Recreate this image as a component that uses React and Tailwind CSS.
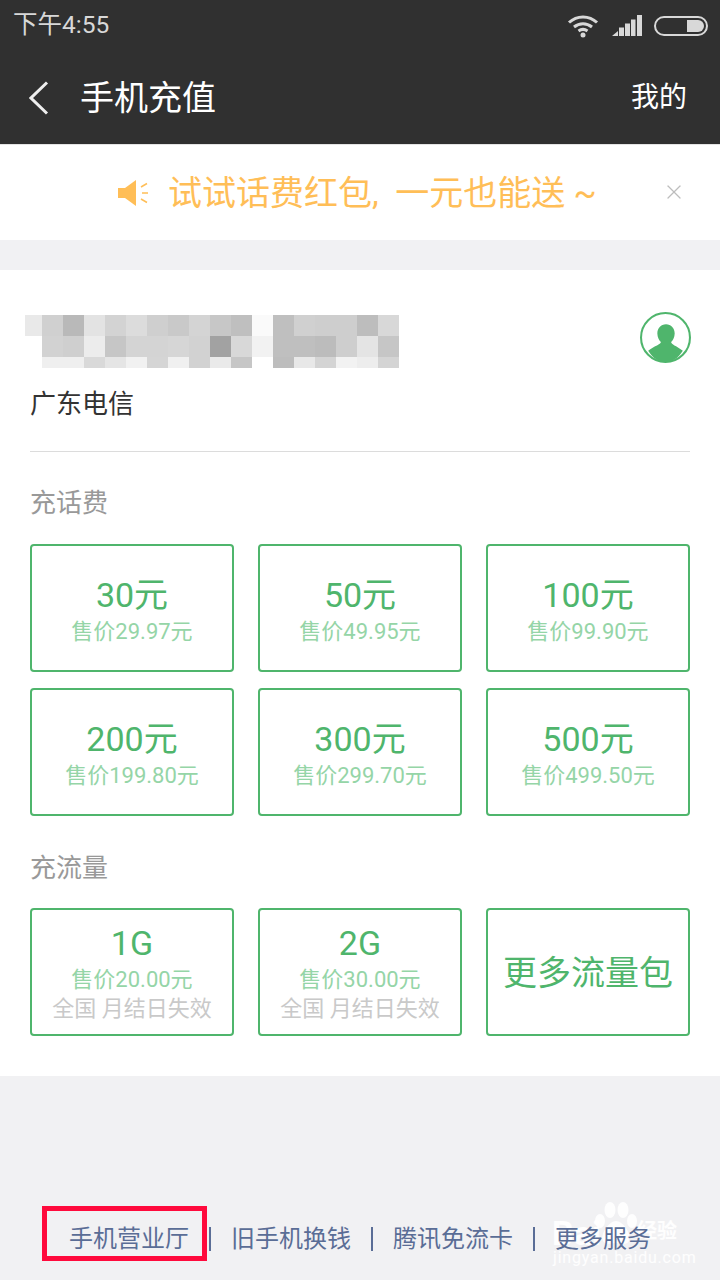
import React from 'react';
import { X } from 'lucide-react';

const font = 'font-["Roboto","Noto_Sans_CJK_SC",sans-serif]';

const mosaic = [
  ['bg-[#e9e9e9]', 'bg-[#d0d0d0]', 'bg-[#b9b9b9]', 'bg-[#e3e3e3]', 'bg-[#d3d3d3]', 'bg-[#dcdcdc]', 'bg-[#cfcfcf]', 'bg-[#c9c9c9]', 'bg-[#d4d4d4]', 'bg-[#c7c7c7]', 'bg-[#bfbfbf]', 'bg-[#fafafa]', 'bg-[#bfbfbf]', 'bg-[#d0d0d0]', 'bg-[#cecece]', 'bg-[#cecece]', 'bg-[#bdbdbd]', 'bg-[#d8d8d8]'],
  ['bg-white', 'bg-[#d2d2d2]', 'bg-[#cfcfcf]', 'bg-[#ececec]', 'bg-[#c6c6c6]', 'bg-[#d4d4d4]', 'bg-[#d4d4d4]', 'bg-[#d6d6d6]', 'bg-[#d2d2d2]', 'bg-[#a2a2a2]', 'bg-[#d8d8d8]', 'bg-[#f2f2f2]', 'bg-[#bfbfbf]', 'bg-[#bfbfbf]', 'bg-[#bcbcbc]', 'bg-[#cecece]', 'bg-[#e4e4e4]', 'bg-[#c6c6c6]'],
  ['bg-white', 'bg-[#efefef]', 'bg-[#efefef]', 'bg-[#d9d9d9]', 'bg-[#e5e5e5]', 'bg-[#f1f1f1]', 'bg-[#d5d5d5]', 'bg-[#f0f0f0]', 'bg-[#d2d2d2]', 'bg-[#eaeaea]', 'bg-[#c6c6c6]', 'bg-white', 'bg-[#bdbdbd]', 'bg-[#e8e8e8]', 'bg-[#d4d4d4]', 'bg-[#f2f2f2]', 'bg-[#ededed]', 'bg-[#d4d4d4]'],
];
const rowHeights = ['h-[21px]', 'h-[21px]', 'h-[11px]'];

const feeTiles = [
  { title: '30元', price: '售价29.97元' },
  { title: '50元', price: '售价49.95元' },
  { title: '100元', price: '售价99.90元' },
  { title: '200元', price: '售价199.80元' },
  { title: '300元', price: '售价299.70元' },
  { title: '500元', price: '售价499.50元' },
];

const dataTiles = [
  { title: '1G', price: '售价20.00元', note: '全国 月结日失效' },
  { title: '2G', price: '售价30.00元', note: '全国 月结日失效' },
];

const links = ['旧手机换钱', '腾讯免流卡', '更多服务'];

const StatusIcons = () => (
  <div className="flex items-center gap-[13px] pt-[1px]">
    <svg width="32" height="24" viewBox="0 0 32 24" fill="none" stroke="#d8d8d8" strokeWidth="3">
      <path d="M2 8.500C10 1 22 1 30 8.500" />
      <path d="M7 13C12.500 8.500 19.500 8.500 25 13" />
      <path d="M11.500 17C14.500 14.800 17.500 14.800 20.500 17" />
      <circle cx="16" cy="21" r="2.500" fill="#d8d8d8" stroke="none" />
    </svg>
    <svg width="30" height="21" viewBox="0 0 30 21" fill="#d8d8d8">
      <path d="M0 21L6 16V21Z" />
      <rect x="7" y="12.500" width="5" height="8.500" />
      <rect x="13" y="8.500" width="5" height="12.500" />
      <rect x="19" y="4.500" width="4.500" height="16.500" />
      <rect x="25" y="0" width="5" height="21" />
    </svg>
    <div className="w-[54px] h-[20px] rounded-full border-2 border-[#d8d8d8] flex justify-end p-[2px] -ml-[1px]">
      <div className="w-[17px] h-full bg-[#d8d8d8] rounded-r-full" />
    </div>
  </div>
);

const BackIcon = () => (
  <svg width="20" height="34" viewBox="0 0 20 34" fill="none" stroke="#eeeeee" strokeWidth="3" className="shrink-0">
    <path d="M18 1.500L2 17L18 32.500" />
  </svg>
);

const SpeakerIcon = () => (
  <svg width="32" height="26" viewBox="0 0 32 26" className="mr-[18px] shrink-0">
    <path d="M0 8H7L18 0V26L7 18H0Z" fill="#ffbe57" />
    <path d="M23 7L29 3.500M24 13H30M23 19L29 22.500" stroke="#ffbe57" strokeWidth="1.500" fill="none" />
  </svg>
);

const AvatarIcon = () => (
  <svg width="51" height="51" viewBox="0 0 50 50">
    <circle cx="25" cy="25" r="24" fill="#fff" stroke="#4fb56c" strokeWidth="2" />
    <path d="M17 21C17 16 20.500 12 25.500 12C30.500 12 34 16 34 21C34 25 32 28 30.500 29.500C31 32 35 33 42 38C37 46 31 49 25 49C19 49 13 46 8 38C15 33 20 32 20.500 29.500C19 28 17 25 17 21Z" fill="#4fb56c" />
  </svg>
);

const Tile = ({ title, price, note }) => (
  <div className="h-[128px] rounded-[4px] border-2 border-[#4fb56c] flex flex-col items-center justify-center bg-white">
    <div className={`text-[34px] text-[#4fb56c] ${note ? 'leading-[40px]' : 'leading-[48px]'}`}>{title}</div>
    <div className={`text-[22px] text-[#95d5a7] ${note ? 'leading-[34px]' : 'leading-[26px]'}`}>{price}</div>
    {note && <div className="text-[22px] leading-[24px] text-[#c9c9c9] whitespace-nowrap">{note}</div>}
  </div>
);

// baidu jingyan stamp, sits under the footer links
const Watermark = () => (
  <div className="absolute left-[550px] top-[1198px] w-[140px] h-[76px] text-white/90 pointer-events-none">
    <svg width="44" height="46" viewBox="0 0 44 46" fill="#ffffff" fillOpacity="0.9" className="absolute left-[44px] top-[3px]">
      <ellipse cx="16" cy="9" rx="5.500" ry="8" />
      <ellipse cx="29" cy="9" rx="5.500" ry="8" />
      <ellipse cx="6" cy="20" rx="5" ry="7" />
      <ellipse cx="38" cy="20" rx="5" ry="7" />
      <path d="M22 20C29 20 38 33 35 40C32 45 27 42 22 42C17 42 12 45 9 40C6 33 15 20 22 20Z" />
    </svg>
    <div className="absolute left-[2px] top-[17px] text-[34px] leading-[36px] font-bold whitespace-nowrap">Bai</div>
    <div className="absolute left-[87px] top-[21px] text-[20px] leading-[24px] font-bold whitespace-nowrap">经验</div>
    <div className="absolute left-[3px] top-[50px] text-[16px] leading-[20px] tracking-[0.800px] whitespace-nowrap">jingyan.baidu.com</div>
  </div>
);

const App = () => {
  return (
    <div className={`relative w-[720px] h-[1280px] overflow-hidden bg-[#f1f1f3] flex flex-col ${font}`}>
      {/* Dark top: status bar and title bar */}
      <div className="h-[144px] bg-[#303030] shrink-0 flex flex-col">
        <div className="h-[50px] pl-[13px] pr-[12px] flex items-center justify-between">
          <span className="text-[24.500px] leading-none text-[#d8d8d8]">下午4:55</span>
          <StatusIcons />
        </div>
        <div className="flex-1 flex items-center pl-[29px] pr-[33px] pt-[1px]">
          <BackIcon />
          <span className="ml-[31px] text-[34px] leading-none text-white">手机充值</span>
          <span className="ml-auto text-[28px] leading-none text-white">我的</span>
        </div>
      </div>

      {/* Notice */}
      <div className="h-[96px] bg-white shrink-0 flex items-center pl-[118px] border-t border-[#e4e4e4]">
        <SpeakerIcon />
        <span className="text-[34px] leading-none text-[#ffbe57] whitespace-nowrap">
          试试话费红包<span className="mr-[8px]">,</span> 一元也能送 ~
        </span>
        <X size={24} strokeWidth={1.300} className="text-[#bdbdbd] absolute left-[662px] top-[180px]" />
      </div>

      {/* Main card */}
      <div className="mt-[30px] h-[806px] bg-white shrink-0 px-[30px] flex flex-col">
        <div className="h-[182px] border-b border-[#dcdcdc] relative shrink-0">
          <div className="-ml-[5px] pt-[45px] flex flex-col">
            {mosaic.map((row, i) => (
              <div key={i} className={`flex ${rowHeights[i]}`}>
                {row.map((cell, j) => (
                  <div key={j} className={`${j === 0 ? 'w-[17px]' : 'w-[21px]'} ${cell}`} />
                ))}
              </div>
            ))}
          </div>
          <div className="mt-[21px] text-[26px] leading-[30px] text-[#333333]">广东电信</div>
          <div className="absolute right-[-1px] top-[42px]">
            <AvatarIcon />
          </div>
        </div>

        <div className="mt-[36px] text-[26px] leading-[30px] text-[#999999]">充话费</div>
        <div className="mt-[26px] grid grid-cols-3 gap-x-[24px] gap-y-[16px]">
          {feeTiles.map((tile) => (
            <Tile key={tile.title} {...tile} />
          ))}
        </div>

        <div className="mt-[37px] text-[26px] leading-[30px] text-[#999999]">充流量</div>
        <div className="mt-[25px] grid grid-cols-3 gap-x-[24px]">
          {dataTiles.map((tile) => (
            <Tile key={tile.title} {...tile} />
          ))}
          <div className="h-[128px] rounded-[4px] border-2 border-[#4fb56c] flex items-center justify-center text-[34px] leading-[40px] pt-[2px] text-[#4fb56c]">
            更多流量包
          </div>
        </div>
      </div>

      <Watermark />

      {/* Footer links */}
      <div className="relative mt-auto mb-[27px] flex items-center pl-[69px] text-[24px] leading-[28px] text-[#5a6d96] whitespace-nowrap">
        <span>手机营业厅</span>
        {links.map((link) => (
          <React.Fragment key={link}>
            <span className="ml-[20px] mr-[20px] h-[24px] w-[2px] bg-[#5a6d96]" />
            <span>{link}</span>
          </React.Fragment>
        ))}
      </div>

      {/* Annotation box drawn over the page */}
      <div className="absolute left-[42px] top-[1206px] w-[165px] h-[55px] border-[5px] border-[#ff0a3c]" />
    </div>
  );
};

export default App;
